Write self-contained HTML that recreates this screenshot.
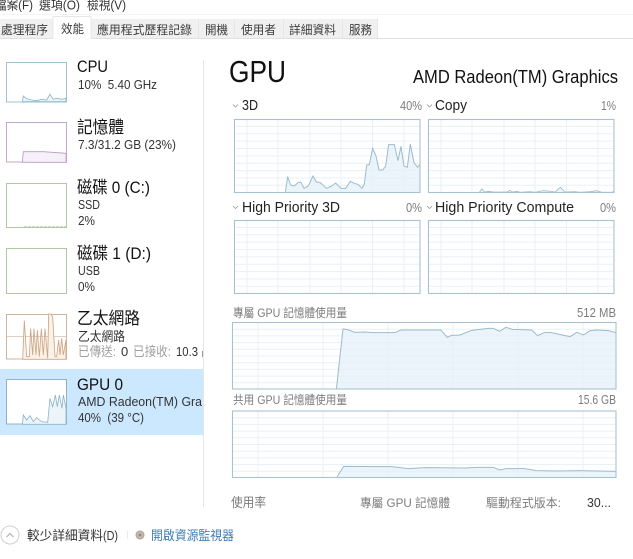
<!DOCTYPE html>
<html lang="zh-Hant"><head><meta charset="utf-8"><title>工作管理員</title>
<style>
html,body{margin:0;padding:0;background:#fff;width:633px;height:559px;overflow:hidden}
svg{display:block;filter:blur(.35px)}
text{font-family:"Liberation Sans","Noto Sans CJK TC",sans-serif;fill:#1e1e1e;white-space:pre}
.g{fill:#767676}
.h{font-size:17px;fill:#111}
.s{font-size:13px;fill:#333}
.t{font-size:12px;fill:#3c3c3c}
.l{font-size:15px;fill:#222}
.p{font-size:12px;fill:#7c7c7c}
.ln{fill:none;stroke:#9cbccb;stroke-width:1}
.f{fill:#e4f0f9;fill-opacity:.7;stroke:none}
.b{fill:none;stroke:#a8c3ce;stroke-width:1.1}
.gd{fill:none;stroke:#e8f1f5;stroke-width:1}
.ch{fill:none;stroke:#999;stroke-width:.8}
</style></head><body>
<svg width="633" height="559" viewBox="0 0 633 559" xmlns="http://www.w3.org/2000/svg">
<defs>
<g id="sg"><path class="gd" d="M0 7.4H186M0 14.7H186M0 22.1H186M0 29.5H186M0 36.9H186M0 44.2H186M0 51.6H186M0 59H186M0 66.3H186M13 0V74M44 0V74M76 0V74M107 0V74M138.5 0V74M170 0V74"/></g>
<g id="bg"><path class="gd" d="M0 6.7H384M0 13.4H384M0 20.1H384M0 26.8H384M0 33.5H384M0 40.2H384M0 46.9H384M0 53.6H384M0 60.3H384M26 0V67M91 0V67M156 0V67M221 0V67M286 0V67M351 0V67"/></g>
</defs>

<!-- menu -->
<text x="-5" y="9.5" font-size="13" textLength="38" lengthAdjust="spacingAndGlyphs" style="fill:#333">檔案(F)</text>
<text x="39" y="9.5" font-size="13" textLength="41" lengthAdjust="spacingAndGlyphs" style="fill:#333">選項(O)</text>
<text x="87" y="9.5" font-size="13" textLength="39" lengthAdjust="spacingAndGlyphs" style="fill:#333">檢視(V)</text>
<path d="M0 14.5H633" stroke="#f4f4f4" fill="none"/>

<!-- tabs -->
<rect x="0" y="19" width="377" height="19" fill="#f0f0f0"/>
<path d="M0 38.5H633" stroke="#e0e0e0" fill="none"/>
<path d="M198.5 19V38M234.5 19V38M283.5 19V38M342.5 19V38M377.5 19V38" stroke="#e6e6e6" fill="none"/>
<rect x="53" y="16" width="38" height="24" fill="#fff"/>
<path d="M53 39V16.5H91V39" stroke="#e8e8e8" fill="none"/>
<text class="t" x="1" y="34" textLength="47" lengthAdjust="spacingAndGlyphs">處理程序</text>
<text class="t" x="61" y="33" textLength="23" lengthAdjust="spacingAndGlyphs">效能</text>
<text class="t" x="97" y="34" textLength="95" lengthAdjust="spacingAndGlyphs">應用程式歷程記錄</text>
<text class="t" x="205" y="34" textLength="23" lengthAdjust="spacingAndGlyphs">開機</text>
<text class="t" x="241" y="34" textLength="35" lengthAdjust="spacingAndGlyphs">使用者</text>
<text class="t" x="289" y="34" textLength="47" lengthAdjust="spacingAndGlyphs">詳細資料</text>
<text class="t" x="349" y="34" textLength="23" lengthAdjust="spacingAndGlyphs">服務</text>

<!-- sidebar -->
<rect x="0" y="369" width="203" height="66" fill="#cce8ff"/>
<path d="M203.5 60V507" stroke="#e6e6e6" fill="none"/>

<!-- CPU thumb -->
<rect x="6.5" y="62.5" width="60" height="39.5" fill="#fff" stroke="#9dc4cf"/>
<g transform="scale(.3333)"><path d="M67 305L70 288 80 296 95 300 110 302 125 298 140 300 150 283 160 298 170 295 185 298 198 295V305Z" fill="#eef5f9" stroke="#8ab8c6" stroke-width="2.5"/></g>
<text class="h" x="77" y="72" textLength="31" lengthAdjust="spacingAndGlyphs">CPU</text>
<text class="s" x="78" y="89" textLength="79" lengthAdjust="spacingAndGlyphs">10%  5.40 GHz</text>

<!-- Memory thumb -->
<rect x="6.5" y="122.5" width="60" height="39.5" fill="#fff" stroke="#c2a9ca"/>
<g transform="scale(.3333)"><path d="M67 487L70 455 130 455 198 460V487Z" fill="#f6f1f8" stroke="#b99ac2" stroke-width="2.5"/></g>
<text class="h" x="77" y="133" textLength="47" lengthAdjust="spacingAndGlyphs">記憶體</text>
<text class="s" x="78" y="149" textLength="98" lengthAdjust="spacingAndGlyphs">7.3/31.2 GB (23%)</text>

<!-- Disk 0 -->
<rect x="6.5" y="183.5" width="60" height="44" fill="#fff" stroke="#afc9a3"/>
<path d="M24 226.7H66" stroke="#b6cfaa" stroke-dasharray="3 1" fill="none"/>
<text class="h" x="77" y="193" textLength="73" lengthAdjust="spacingAndGlyphs">磁碟 0 (C:)</text>
<text class="s" x="78" y="209" textLength="22" lengthAdjust="spacingAndGlyphs">SSD</text>
<text class="s" x="78" y="225" textLength="17" lengthAdjust="spacingAndGlyphs">2%</text>

<!-- Disk 1 -->
<rect x="6.5" y="248.5" width="60" height="45" fill="#fff" stroke="#afc9a3"/>
<text class="h" x="77" y="259" textLength="74" lengthAdjust="spacingAndGlyphs">磁碟 1 (D:)</text>
<text class="s" x="78" y="275" textLength="22" lengthAdjust="spacingAndGlyphs">USB</text>
<text class="s" x="78" y="291" textLength="17" lengthAdjust="spacingAndGlyphs">0%</text>

<!-- Ethernet -->
<rect x="6.5" y="314.5" width="60" height="44.5" fill="#fff" stroke="#cdb49c"/>
<path d="M7 336.5H66" stroke="#ddcfc1" fill="none"/>
<g transform="translate(0 170) scale(.3333)"><path d="M68 568L73 452 80 560 88 560 92 476 98 555 102 476 108 555 112 480 118 560 124 476 130 555 135 476 143 565 146 432 152 432 158 440 165 560 170 560 176 510 180 555 185 505 190 555 198 510V568Z" fill="#faf1e8" stroke="#cfa582" stroke-width="2.5"/></g>
<text class="h" x="77" y="324" textLength="63" lengthAdjust="spacingAndGlyphs">乙太網路</text>
<text class="s" x="78" y="341" textLength="47" lengthAdjust="spacingAndGlyphs">乙太網路</text>
<text class="s" x="78" y="356" textLength="38" lengthAdjust="spacingAndGlyphs" style="fill:#a0a0a0">已傳送:</text>
<text class="s" x="121" y="356">0</text>
<text class="s" x="133" y="356" textLength="38" lengthAdjust="spacingAndGlyphs" style="fill:#a0a0a0">已接收:</text>
<text class="s" x="176" y="356" textLength="22" lengthAdjust="spacingAndGlyphs">10.3</text>
<rect x="202" y="351" width="1" height="6" fill="#999"/>

<!-- GPU 0 -->
<rect x="6.5" y="379.5" width="60" height="44.5" fill="#fff" stroke="#8fb3c2"/>
<g transform="translate(0 365) scale(.3333)"><path d="M67 178L70 150 80 165 90 152 100 170 110 158 125 170 143 172 150 100 158 125 166 90 172 125 178 90 186 130 190 90 198 130V178Z" fill="#edf4f9" stroke="#8fb6c6" stroke-width="2.5"/></g>
<text class="h" x="77" y="390" textLength="46" lengthAdjust="spacingAndGlyphs">GPU 0</text>
<text class="s" x="78" y="406" textLength="124" lengthAdjust="spacingAndGlyphs">AMD Radeon(TM) Gra</text>
<text class="s" x="78" y="422" textLength="66" lengthAdjust="spacingAndGlyphs">40%  (39 °C)</text>

<!-- Header -->
<text x="229" y="82" font-size="31" textLength="57" lengthAdjust="spacingAndGlyphs" style="fill:#111">GPU</text>
<text x="413" y="83" font-size="18" textLength="205" lengthAdjust="spacingAndGlyphs" style="fill:#111">AMD Radeon(TM) Graphics</text>

<!-- labels -->
<path class="ch" d="M233 104.5L235.5 107 238 104.5M427 104.5L429.5 107 432 104.5M233 206L235.5 208.5 238 206M427 206L429.5 208.5 432 206"/>
<text class="l" x="242" y="110" textLength="16" lengthAdjust="spacingAndGlyphs">3D</text>
<text class="p g" x="400" y="110" font-size="13" style="font-size:13px" textLength="22" lengthAdjust="spacingAndGlyphs">40%</text>
<text class="l" x="435" y="110" textLength="32" lengthAdjust="spacingAndGlyphs">Copy</text>
<text class="p g" x="601" y="110" style="font-size:13px" textLength="15" lengthAdjust="spacingAndGlyphs">1%</text>
<text class="l" x="242" y="212" textLength="98" lengthAdjust="spacingAndGlyphs">High Priority 3D</text>
<text class="p g" x="406" y="212" style="font-size:13px" textLength="16" lengthAdjust="spacingAndGlyphs">0%</text>
<text class="l" x="435" y="212" textLength="139" lengthAdjust="spacingAndGlyphs">High Priority Compute</text>
<text class="p g" x="600" y="212" style="font-size:13px" textLength="16" lengthAdjust="spacingAndGlyphs">0%</text>

<!-- 3D graph -->
<use href="#sg" x="234" y="119"/>
<g transform="translate(225 50) scale(.3333)">
<path class="f" d="M181 428L188 380 197 405 208 408 220 397 228 397 237 415 250 408 264 378 274 396 285 397 305 415 320 408 332 399 348 415 362 415 376 394 390 401 399 403 411 415 418 402 425 345 433 344 443 295 453 318 462 360 473 360 482 349 491 284 508 284 519 332 528 289 537 348 547 352 556 282 567 338 578 352 585 342V428Z"/>
<path class="ln" style="stroke-width:3" d="M181 428L188 380 197 405 208 408 220 397 228 397 237 415 250 408 264 378 274 396 285 397 305 415 320 408 332 399 348 415 362 415 376 394 390 401 399 403 411 415 418 402 425 345 433 344 443 295 453 318 462 360 473 360 482 349 491 284 508 284 519 332 528 289 537 348 547 352 556 282 567 338 578 352 585 342"/>
</g>
<rect class="b" x="234.5" y="119.5" width="185.5" height="73"/>

<!-- Copy graph -->
<use href="#sg" x="428" y="119"/>
<g transform="translate(420 50) scale(.3333)">
<path class="f" d="M178 428L186 417 194 426 205 424 220 426 262 426 269 421 277 426 290 424 300 427 330 425 345 427 370 422 385 423 405 426 421 412 435 426 465 425 480 427 510 425 530 422 545 427 575 427 583 424V428Z"/>
<path class="ln" style="stroke-width:2.5" d="M178 427L186 417 194 426 205 424 220 426 262 426 269 421 277 426 290 424 300 427 330 425 345 427 370 422 385 423 405 426 421 412 435 426 465 425 480 427 510 425 530 422 545 427 575 427 583 424"/>
</g>
<rect class="b" x="428.5" y="119.5" width="185.5" height="73"/>

<!-- HP -->
<use href="#sg" x="234" y="220"/>
<rect class="b" x="234.5" y="220.5" width="185.5" height="73"/>
<use href="#sg" x="428" y="220"/>
<rect class="b" x="428.5" y="220.5" width="185.5" height="73"/>

<!-- Dedicated -->
<text class="p" x="233" y="317" textLength="114" lengthAdjust="spacingAndGlyphs">專屬 GPU 記憶體使用量</text>
<text class="p" x="577" y="317" style="font-size:13px" textLength="39" lengthAdjust="spacingAndGlyphs">512 MB</text>
<use href="#bg" x="232" y="322.5"/>
<g transform="translate(225 300) scale(.3333)">
<path class="f" d="M334 268L354 87 368 89 390 97 420 96 445 98 510 98 528 90 648 90 667 112 680 106 705 105 740 91 790 85 805 85 824 94 843 82 862 88 920 90 938 107 960 97 980 98 1035 110 1056 97 1075 105 1096 92 1115 90 1150 92 1173 98V268Z"/>
<path class="ln" style="stroke-width:3" d="M334 268L354 87 368 89 390 97 420 96 445 98 510 98 528 90 648 90 667 112 680 106 705 105 740 91 790 85 805 85 824 94 843 82 862 88 920 90 938 107 960 97 980 98 1035 110 1056 97 1075 105 1096 92 1115 90 1150 92 1173 98"/>
</g>
<rect class="b" x="232.5" y="322.5" width="383.5" height="66.5"/>

<!-- Shared -->
<text class="p" x="233" y="404" textLength="114" lengthAdjust="spacingAndGlyphs">共用 GPU 記憶體使用量</text>
<text class="p" x="578" y="404" style="font-size:13px" textLength="38" lengthAdjust="spacingAndGlyphs">15.6 GB</text>
<use href="#bg" x="232" y="411"/>
<g transform="translate(225 390) scale(.3333)">
<path class="f" d="M335 263L356 229 500 230 550 236 600 233 720 234 760 232 805 232 824 240 843 236 900 236 935 242 1000 243 1060 242 1173 244V263Z"/>
<path class="ln" style="stroke-width:3" d="M335 263L356 229 500 230 550 236 600 233 720 234 760 232 805 232 824 240 843 236 900 236 935 242 1000 243 1060 242 1173 244"/>
</g>
<rect class="b" x="232.5" y="411" width="383.5" height="66.5"/>

<!-- Bottom stats -->
<text class="p" x="231" y="507" style="font-size:13px" textLength="35" lengthAdjust="spacingAndGlyphs">使用率</text>
<text class="p" x="360" y="507" textLength="90" lengthAdjust="spacingAndGlyphs">專屬 GPU 記憶體</text>
<text class="p" x="486" y="507" textLength="75" lengthAdjust="spacingAndGlyphs">驅動程式版本:</text>
<text class="s" x="587" y="507" textLength="24" lengthAdjust="spacingAndGlyphs">30...</text>

<!-- Footer -->
<circle cx="10" cy="535" r="9" fill="#fff" stroke="#cfcfcf"/>
<path d="M6.5 537L10 533.5 13.5 537" fill="none" stroke="#aaa"/>
<text class="s" x="27" y="540" textLength="76" lengthAdjust="spacingAndGlyphs">較少詳細資料</text>
<text class="s" x="103" y="540" style="font-size:13px" textLength="15" lengthAdjust="spacingAndGlyphs">(D)</text>
<path d="M127.5 531V539" stroke="#eaeaea" fill="none"/>
<circle cx="140" cy="535" r="4" fill="#c0bbb6" stroke="#a6a09a"/>
<circle cx="140" cy="535" r="1.4" fill="#b97a6a"/>
<text class="s" x="151" y="540" textLength="83" lengthAdjust="spacingAndGlyphs" style="fill:#3f7cb6">開啟資源監視器</text>
</svg>
</body></html>
